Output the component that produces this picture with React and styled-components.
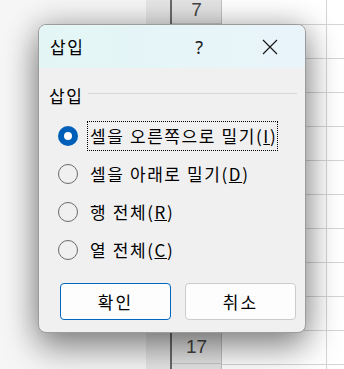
import React from 'react';
import styled, { createGlobalStyle } from 'styled-components';

const GlobalStyle = createGlobalStyle`
  html, body {
    margin: 0;
    padding: 0;
    overflow: hidden;
  }
  body {
    font-family: "Noto Sans CJK KR", "Noto Sans", sans-serif;
  }
`;

const Screen = styled.div`
  position: relative;
  width: 344px;
  height: 369px;
  overflow: hidden;
  display: flex;
  background: #fafafa;
`;

const SideArea = styled.div`
  width: 146px;
  flex: none;
  background: #f6f6f6;
`;

const Gutter = styled.div`
  width: 24px;
  flex: none;
  background: #e6e6e6;
`;

const FreezeLine = styled.div`
  width: 2px;
  flex: none;
  background: #6b6b6b;
`;

const RowHeaders = styled.div`
  width: 49px;
  flex: none;
  background: #e4e4e4;
  border-right: 1px solid #c2c2c2;
  display: flex;
  flex-direction: column;
`;

// the first row is only partly on screen, so it is shorter
const RowHead = styled.div`
  height: ${p => (p.$partial ? '24px' : '34px')};
  padding-bottom: ${p => (p.$partial ? '3px' : '0')};
  flex: none;
  box-sizing: border-box;
  border-bottom: 1px solid #c6c6c6;
  display: flex;
  align-items: center;
  justify-content: center;
  font-family: "Liberation Sans", Arial, sans-serif;
  font-size: 19px;
  line-height: 20px;
  color: #454545;
`;

const Cells = styled.div`
  flex: 1;
  background-color: #ffffff;
  background-image:
    linear-gradient(90deg, transparent 104px, #d5d5d5 104px, #d5d5d5 105px, transparent 105px),
    linear-gradient(#d5d5d5 1px, transparent 1px);
  background-size: 100% 100%, 100% 34px;
  background-position: 0 0, 0 24px;
`;

const Dialog = styled.div`
  position: absolute;
  left: 38px;
  top: 24px;
  width: 268px;
  height: 309px;
  box-sizing: border-box;
  border: 1px solid #9c9c9c;
  border-radius: 8px;
  background: #f0f0f0;
  overflow: hidden;
  display: flex;
  flex-direction: column;
  letter-spacing: 1.6px;
  box-shadow: 0 0 30px rgba(0, 0, 0, 0.25), 0 16px 34px rgba(0, 0, 0, 0.38);
`;

const TitleBar = styled.div`
  height: 43px;
  flex: none;
  display: flex;
  align-items: center;
  background: linear-gradient(90deg, #e3f6f5, #e9f4fa);
  padding-left: 11px;
`;

const Title = styled.div`
  flex: 1;
  font-size: 17px;
  color: #000;
`;

const CaptionButton = styled.div`
  width: 70px;
  height: 43px;
  display: flex;
  align-items: center;
  justify-content: center;
  font-family: "Noto Sans", sans-serif;
  font-size: 18px;
  color: #1a1a1a;
`;

const Body = styled.div`
  flex: 1;
  display: flex;
  flex-direction: column;
  padding: 15px 8px 12px 10px;
`;

const GroupHeader = styled.div`
  display: flex;
  align-items: center;
  gap: 5px;
  height: 24px;
  font-size: 17px;
  color: #000;
`;

const GroupRule = styled.div`
  flex: 1;
  height: 1px;
  background: #d8d8d8;
  margin-top: -3px;
`;

const RadioList = styled.div`
  display: flex;
  flex-direction: column;
  margin-top: 10px;
  padding-left: 9px;
`;

const RadioRow = styled.div`
  height: 38px;
  display: flex;
  align-items: center;
  gap: 9px;
`;

const RadioCircle = styled.div`
  width: 20px;
  height: 20px;
  box-sizing: border-box;
  border-radius: 50%;
  flex: none;
  display: flex;
  align-items: center;
  justify-content: center;
  border: ${p => (p.$checked ? 'none' : '1px solid #6a6a6a')};
  background: ${p => (p.$checked ? '#005fb8' : 'transparent')};
  &::after {
    content: '';
    display: ${p => (p.$checked ? 'block' : 'none')};
    width: 8px;
    height: 8px;
    border-radius: 50%;
    background: #ffffff;
  }
`;

const RadioLabel = styled.div`
  font-size: 17px;
  color: #000;
  line-height: 24px;
  padding: 2px 0 2px 2px;
  border: 1px dotted ${p => (p.$focused ? '#000' : 'transparent')};
  white-space: nowrap;
`;

const ButtonRow = styled.div`
  display: flex;
  gap: 14px;
  margin-top: 14px;
  padding-left: 11px;
`;

const Button = styled.div`
  width: 111px;
  height: 37px;
  box-sizing: border-box;
  border-radius: 4px;
  border: 1px solid ${p => (p.$primary ? '#0067c0' : '#cccccc')};
  background: #fdfdfd;
  display: flex;
  align-items: center;
  justify-content: center;
  font-size: 17px;
  letter-spacing: 2px;
  color: #000;
`;

const options = [
  { text: '셀을 오른쪽으로 밀기', key: 'I', checked: true },
  { text: '셀을 아래로 밀기', key: 'D' },
  { text: '행 전체', key: 'R' },
  { text: '열 전체', key: 'C' },
];

// rows 8–16 sit under the dialog, so only the visible numbers are printed
const rows = [7, null, null, null, null, null, null, null, null, null, 17];

export default function App() {
  return (
    <>
      <GlobalStyle />
      <Screen>
        <SideArea />
        <Gutter />
        <FreezeLine />
        <RowHeaders>
          {rows.map((n, i) => (
            <RowHead key={i} $partial={i === 0}>{n}</RowHead>
          ))}
        </RowHeaders>
        <Cells />

        <Dialog>
          <TitleBar>
            <Title>삽입</Title>
            <CaptionButton>?</CaptionButton>
            <CaptionButton>
              <svg width="16" height="16" viewBox="0 0 16 16">
                <path d="M1 1 L15 15 M15 1 L1 15" stroke="#1a1a1a" strokeWidth="1.2" fill="none" />
              </svg>
            </CaptionButton>
          </TitleBar>
          <Body>
            <GroupHeader>
              삽입
              <GroupRule />
            </GroupHeader>
            <RadioList>
              {options.map(o => (
                <RadioRow key={o.key}>
                  <RadioCircle $checked={o.checked} />
                  <RadioLabel $focused={o.checked}>
                    {o.text}(<u>{o.key}</u>)
                  </RadioLabel>
                </RadioRow>
              ))}
            </RadioList>
            <ButtonRow>
              <Button $primary>확인</Button>
              <Button>취소</Button>
            </ButtonRow>
          </Body>
        </Dialog>
      </Screen>
    </>
  );
}
